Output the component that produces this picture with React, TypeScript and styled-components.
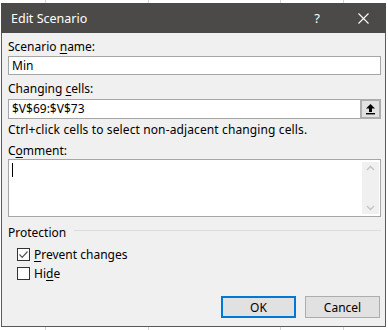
import React from "react";
import styled, { createGlobalStyle } from "styled-components";

const Global = createGlobalStyle`
  html, body { margin: 0; padding: 0; }
  body {
    width: 388px;
    height: 330px;
    overflow: hidden;
    background-color: #ffffff;
    background-image:
      linear-gradient(to right, transparent 45px, #d4d4d4 45px, #d4d4d4 46px, transparent 46px),
      linear-gradient(to right, transparent 148px, #d4d4d4 148px, #d4d4d4 149px, transparent 149px),
      linear-gradient(to right, transparent 280px, #d4d4d4 280px, #d4d4d4 281px, transparent 281px),
      linear-gradient(to right, transparent 343px, #d4d4d4 343px, #d4d4d4 344px, transparent 344px);
    font-family: "Noto Sans", "Open Sans", sans-serif;
  }
  #root { padding: 3px 0 0 1px; }
`;

const Dialog = styled.div`
  width: 385px;
  height: 324px;
  box-sizing: border-box;
  border: 1px solid #5a5a5a;
  border-top: none;
  background: #f0f0f0;
  display: flex;
  flex-direction: column;
  font-size: 12px;
  color: #000;
`;

const TitleBar = styled.div`
  height: 30px;
  margin: 0 -1px;
  background: #4b4a48;
  color: #fff;
  display: flex;
  align-items: center;
  padding-left: 10px;
  font-size: 12.5px;
`;

const Title = styled.span`
  flex: 1;
`;

const TitleButton = styled.div`
  width: 46px;
  height: 30px;
  display: flex;
  align-items: center;
  justify-content: center;
  font-size: 13px;
`;

const Body = styled.div`
  flex: 1;
  display: flex;
  flex-direction: column;
  padding: 6px 4px 0 6px;
`;

const Label = styled.div<{ $mt?: number; $mb?: number }>`
  line-height: 16px;
  height: 16px;
  margin-top: ${(p) => p.$mt ?? 0}px;
  margin-bottom: ${(p) => p.$mb ?? 0}px;
  white-space: nowrap;
`;

const Hint = styled(Label)`
  letter-spacing: 0.12px;
`;

const U = styled.span`
  text-decoration: underline;
  text-underline-offset: 2px;
`;

const TextBox = styled.div<{ $h: number }>`
  box-sizing: border-box;
  height: ${(p) => p.$h}px;
  border: 1px solid #a6a6a6;
  background: #fff;
  display: flex;
  align-items: center;
  padding-left: 3px;
  line-height: 16px;
`;

const RefBox = styled(TextBox)`
  padding-right: 0;
`;

const RefText = styled.span`
  flex: 1;
`;

const CollapseButton = styled.div`
  box-sizing: border-box;
  width: 21px;
  height: 20px;
  margin: -1px -1px -1px 0;
  border: 2px solid #adadad;
  background: #e1e1e1;
  display: flex;
  align-items: center;
  justify-content: center;
`;

const CommentBox = styled.div`
  box-sizing: border-box;
  height: 58px;
  border: 1px solid #a6a6a6;
  background: #fff;
  display: flex;
  padding: 2px 1px 2px 3px;
`;

const CommentArea = styled.div`
  flex: 1;
  padding-top: 1px;
`;

const Caret = styled.div`
  width: 1px;
  height: 14px;
  background: #000;
`;

const ScrollBar = styled.div`
  width: 17px;
  background: #f0f0f0;
  display: flex;
  flex-direction: column;
  justify-content: space-between;
  align-items: center;
  padding: 3px 0;
`;

const GroupHeader = styled.div`
  display: flex;
  align-items: center;
  margin-top: 7px;
  height: 16px;
`;

const GroupLine = styled.div`
  flex: 1;
  height: 1px;
  background: #dcdcdc;
  margin-left: 8px;
  margin-top: -3px;
`;

const CheckRow = styled.div<{ $mt: number }>`
  display: flex;
  align-items: center;
  height: 16px;
  margin-top: ${(p) => p.$mt}px;
  padding-left: 9px;
`;

const Box = styled.div`
  box-sizing: border-box;
  width: 13px;
  height: 13px;
  border: 1px solid #333;
  background: #fff;
  margin-right: 4px;
  display: flex;
  align-items: center;
  justify-content: center;
`;

const Footer = styled.div`
  margin-top: auto;
  display: flex;
  justify-content: flex-end;
  gap: 9px;
  padding: 0 1px 8px 0;
`;

const Button = styled.div<{ $default?: boolean }>`
  box-sizing: border-box;
  width: 75px;
  height: 22px;
  background: #e1e1e1;
  border: ${(p) => (p.$default ? "2px solid #0078d7" : "1px solid #adadad")};
  display: flex;
  align-items: center;
  justify-content: center;
`;

export default function App() {
  return (
    <>
      <Global />
      <Dialog>
        <TitleBar>
          <Title>Edit Scenario</Title>
          <TitleButton>?</TitleButton>
          <TitleButton>
            <svg width="11" height="11" viewBox="0 0 11 11">
              <path d="M0.5 0.5L10.5 10.5M10.5 0.5L0.5 10.5" stroke="#fff" strokeWidth="1.1" />
            </svg>
          </TitleButton>
        </TitleBar>
        <Body>
          <Label $mb={1}>
            Scenario <U>n</U>ame:
          </Label>
          <TextBox $h={19}>Min</TextBox>
          <Label $mt={6} $mb={2}>
            Changing <U>c</U>ells:
          </Label>
          <RefBox $h={20}>
            <RefText>$V$69:$V$73</RefText>
            <CollapseButton>
              <svg width="11" height="12" viewBox="0 0 11 12">
                <path d="M5.5 1L10 5.5H7V9H4V5.5H1Z" fill="#000" />
                <rect x="1" y="10" width="9" height="1.4" fill="#000" />
              </svg>
            </CollapseButton>
          </RefBox>
          <Hint $mt={3}>Ctrl+click cells to select non-adjacent changing cells.</Hint>
          <Label $mt={5}>
            C<U>o</U>mment:
          </Label>
          <CommentBox>
            <CommentArea>
              <Caret />
            </CommentArea>
            <ScrollBar>
              <svg width="9" height="6" viewBox="0 0 9 6">
                <path d="M1 5L4.5 1.5L8 5" stroke="#c2c2c2" strokeWidth="1.3" fill="none" />
              </svg>
              <svg width="9" height="6" viewBox="0 0 9 6">
                <path d="M1 1L4.5 4.5L8 1" stroke="#c2c2c2" strokeWidth="1.3" fill="none" />
              </svg>
            </ScrollBar>
          </CommentBox>
          <GroupHeader>
            <span>Protection</span>
            <GroupLine />
          </GroupHeader>
          <CheckRow $mt={6}>
            <Box>
              <svg width="11" height="11" viewBox="0 0 11 11">
                <path d="M1.5 5.5L4.2 8.3L9.5 2.5" stroke="#555" strokeWidth="1.2" fill="none" />
              </svg>
            </Box>
            <span>
              <U>P</U>revent changes
            </span>
          </CheckRow>
          <CheckRow $mt={3}>
            <Box />
            <span>
              Hi<U>d</U>e
            </span>
          </CheckRow>
          <Footer>
            <Button $default>OK</Button>
            <Button>Cancel</Button>
          </Footer>
        </Body>
      </Dialog>
    </>
  );
}
